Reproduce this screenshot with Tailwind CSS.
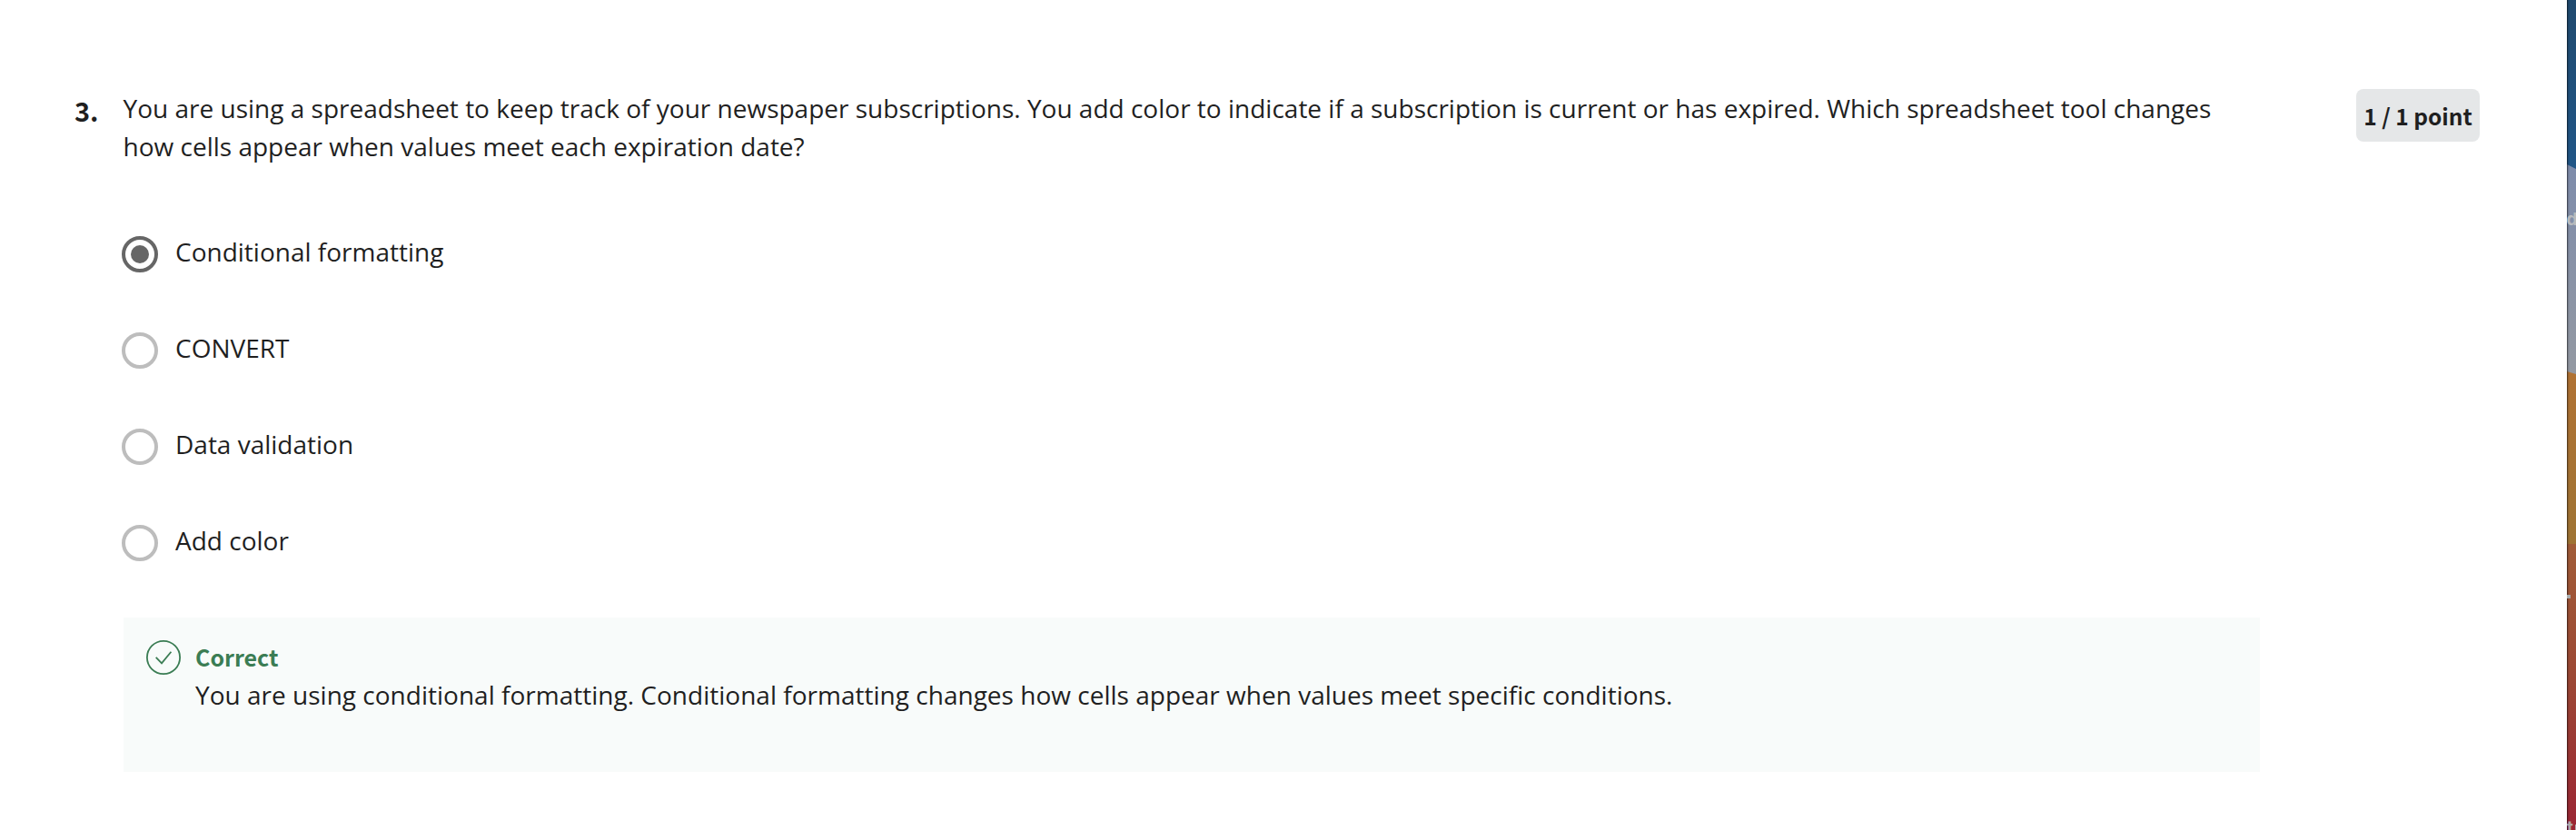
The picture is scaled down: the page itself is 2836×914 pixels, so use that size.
<!DOCTYPE html>
<html lang="en">
<head>
<meta charset="utf-8">
<title>Quiz question</title>
<script src="https://cdn.jsdelivr.net/npm/@tailwindcss/browser@4"></script>
</head>
<body class="flex h-[914px] w-[2836px] overflow-hidden bg-white font-['Open_Sans',sans-serif] text-[28px] leading-[42px] text-[#1f1f1f]">
<main class="flex w-[2826px] shrink-0 items-start pt-[98px]">
  <div class="w-[135px] shrink-0 pl-[82px] pt-[2px] font-['Noto_Sans_CJK_SC',sans-serif] text-[29px] leading-[42px] font-bold">3.</div>
  <section class="w-[2353px] shrink-0">
    <p class="h-[84px] w-[2310px] whitespace-nowrap pl-[0.5px] tracking-[0.003px]">You are using a spreadsheet to keep track of your newspaper subscriptions. You add color to indicate if a subscription is current or has expired. Which spreadsheet tool changes<br>how cells appear when values meet each expiration date?</p>
    <div class="mt-[74px] -ml-[1px] flex flex-col gap-[64px]">
      <label class="flex h-[42px] items-start gap-[19px]"><span class="mt-[4px] flex size-[40px] items-center justify-center rounded-full border-4 border-[#666]"><span class="size-[20px] rounded-full bg-[#666]"></span></span>Conditional formatting</label>
      <label class="flex h-[42px] items-start gap-[19px]"><span class="mt-[4px] size-[40px] rounded-full border-4 border-[#bdbdbd]"></span>CONVERT</label>
      <label class="flex h-[42px] items-start gap-[19px]"><span class="mt-[4px] size-[40px] rounded-full border-4 border-[#bdbdbd]"></span>Data validation</label>
      <label class="flex h-[42px] items-start gap-[19px]"><span class="mt-[4px] size-[40px] rounded-full border-4 border-[#bdbdbd]"></span>Add color</label>
    </div>
    <div class="mt-[64px] ml-[1px] flex h-[170px] items-start bg-[#f8fbfa] pt-[22px] pl-[24px]">
      <svg class="mt-[2px] mr-[15px] size-[40px] shrink-0" viewBox="0 0 40 40" fill="none" stroke="#3b7d54" stroke-width="1.8"><circle cx="20" cy="20" r="18.1"/><path d="M11.7 19.9 L18 26.4 L28.4 13.8"/></svg>
      <div>
        <div class="font-['Noto_Sans_CJK_SC',sans-serif] text-[25px] leading-[42px] font-bold text-[#3b7d54]">Correct</div>
        <p class="whitespace-nowrap tracking-[0.01px]">You are using conditional formatting. Conditional formatting changes how cells appear when values meet specific conditions.</p>
      </div>
    </div>
  </section>
  <div class="ml-[106px] flex h-[58px] w-[136px] shrink-0 items-center justify-center rounded-[8px] bg-[#e5e7e8] pt-[2px] font-['Noto_Sans_CJK_SC',sans-serif] text-[24.5px] leading-[42px] font-bold whitespace-nowrap">1 / 1 point</div>
</main>
<aside class="w-[10px] shrink-0">
  <svg class="block h-[914px] w-[10px]" viewBox="0 0 10 914">
    <defs>
      <linearGradient id="blue" x2="0" y2="1"><stop stop-color="#204a6f"/><stop offset="1" stop-color="#215687"/></linearGradient>
      <linearGradient id="grey" x2="0" y2="1"><stop stop-color="#7e8cab"/><stop offset="1" stop-color="#9499a2"/></linearGradient>
      <linearGradient id="gold" x2="0" y2="1"><stop stop-color="#b07234"/><stop offset="1" stop-color="#9f7434"/></linearGradient>
      <linearGradient id="red" x2="0" y2="1"><stop stop-color="#a15c38"/><stop offset=".45" stop-color="#9c4935"/><stop offset="1" stop-color="#9b2534"/></linearGradient>
      <linearGradient id="edge" x2="1" y2="0"><stop stop-color="#000" stop-opacity=".3"/><stop offset="1" stop-color="#000" stop-opacity="0"/></linearGradient>
    </defs>
    <path fill="url(#grey)" d="M0 180H10V414H0z"/>
    <path fill="url(#blue)" d="M0 0H10V186L0 181z"/>
    <path fill="url(#gold)" d="M0 409L10 412V600H0z"/>
    <path fill="url(#red)" d="M0 599H10V914H0z"/>
    <rect width="3" height="914" fill="url(#edge)"/>
    <rect width="1" height="914" fill="#000" fill-opacity=".3"/>
    <text x="-0.5" y="248" font-family="Inter" font-weight="700" font-size="19" fill="#b9bbbd">d</text>
    <rect y="655" width="4" height="4" fill="#a9acad"/>
    <text x="0" y="918" font-family="Inter" font-weight="700" font-size="19" fill="#b0a9a9">t</text>
    <rect x="9" y="908" width="1" height="6" fill="#b0a9a9"/>
  </svg>
</aside>
</body>
</html>
